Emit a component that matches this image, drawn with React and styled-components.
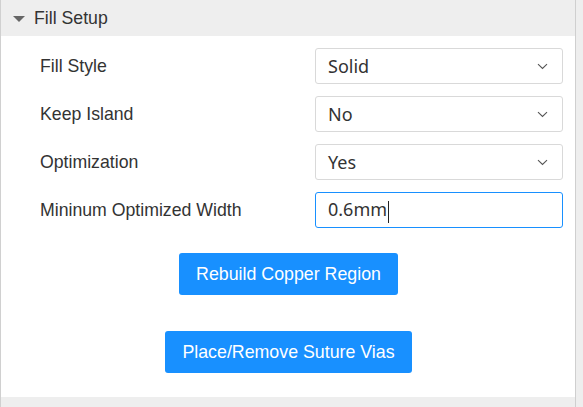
import React from "react";
import styled, { createGlobalStyle } from "styled-components";

const GlobalStyle = createGlobalStyle`
  html, body {
    margin: 0;
    padding: 0;
    background: #eeeeee;
  }
  body {
    font-family: "Liberation Sans", Arial, sans-serif;
    color: #333;
  }
`;

const Page = styled.div`
  display: flex;
  width: 583px;
  height: 407px;
  overflow: hidden;
  background: #eeeeee;
`;

const Panel = styled.div`
  width: 574px;
  border-left: 1px solid #d0d0d0;
  border-right: 1px solid #cfcfcf;
  display: flex;
  flex-direction: column;
`;

const SectionHeader = styled.div`
  flex: 0 0 36px;
  display: flex;
  align-items: center;
  gap: 9px;
  padding-left: 12px;
  background: #eeeeee;
  font-size: 17.7px;
  color: #333;
`;

const NextSection = styled.div`
  flex: 1;
  background: #eeeeee;
`;

const Caret = styled.span`
  width: 0;
  height: 0;
  border-left: 6px solid transparent;
  border-right: 6px solid transparent;
  border-top: 6px solid #666;
  margin-top: 1px;
`;

const Body = styled.div`
  background: #fff;
  padding: 12px 12px 24px 39px;
  display: flex;
  flex-direction: column;
  gap: 12px;
`;

const Row = styled.div`
  display: flex;
  align-items: center;
  justify-content: space-between;
  height: 36px;
`;

const Label = styled.span`
  font-size: 17.7px;
  color: #333;
  margin-top: 1px;
`;

const Select = styled.div`
  box-sizing: border-box;
  width: 248px;
  height: 36px;
  border: 1px solid #d9d9d9;
  border-radius: 3px;
  display: flex;
  align-items: center;
  justify-content: space-between;
  padding: 0 14px 0 12px;
  font-family: "Noto Sans", "Open Sans", sans-serif;
  font-size: 18px;
  color: #333;
`;

const Input = styled(Select)`
  border-color: #1890ff;
`;

const Cursor = styled.span`
  display: inline-block;
  width: 1px;
  height: 22px;
  background: #222;
  vertical-align: middle;
  margin-left: 1px;
`;

const Actions = styled.div`
  display: flex;
  flex-direction: column;
  align-items: center;
  gap: 36px;
  margin-top: 13px;
  margin-left: -26px;
`;

const Button = styled.button`
  height: 42px;
  padding: 0 17px;
  border: none;
  border-radius: 3px;
  background: #1890ff;
  color: #fff;
  font-family: "Liberation Sans", Arial, sans-serif;
  font-size: 17.8px;
  cursor: pointer;
`;

const Chevron = () => (
  <svg width="11" height="7" viewBox="0 0 11 7">
    <path d="M1 1.2 L5.5 5.5 L10 1.2" fill="none" stroke="#555" strokeWidth="1.1" />
  </svg>
);

const rows = [
  { label: "Fill Style", value: "Solid" },
  { label: "Keep Island", value: "No" },
  { label: "Optimization", value: "Yes" },
];

export default function App() {
  return (
    <>
      <GlobalStyle />
      <Page>
        <Panel>
          <SectionHeader>
            <Caret />
            Fill Setup
          </SectionHeader>
          <Body>
            {rows.map((r) => (
              <Row key={r.label}>
                <Label>{r.label}</Label>
                <Select>
                  {r.value}
                  <Chevron />
                </Select>
              </Row>
            ))}
            <Row>
              <Label>Mininum Optimized Width</Label>
              <Input>
                <span>
                  0.6mm
                  <Cursor />
                </span>
              </Input>
            </Row>
            <Actions>
              <Button>Rebuild Copper Region</Button>
              <Button>Place/Remove Suture Vias</Button>
            </Actions>
          </Body>
          <NextSection />
        </Panel>
      </Page>
    </>
  );
}
